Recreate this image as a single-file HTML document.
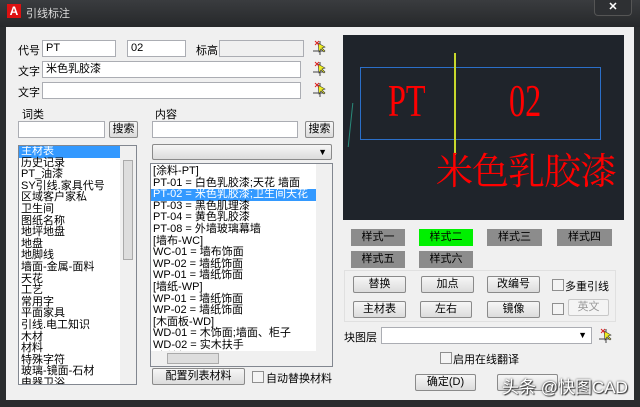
<!DOCTYPE html>
<html><head><meta charset="utf-8"><style>
*{margin:0;padding:0;box-sizing:border-box}
body{width:640px;height:407px;overflow:hidden;background:#2a2c2e;font-family:"Liberation Sans","Noto Sans CJK SC",sans-serif;font-size:11px;color:#000;position:relative}
.a{position:absolute;white-space:nowrap}
.in{position:absolute;background:#fff;border:1px solid #abadb3;height:17px;line-height:15px;padding-left:3px;font-size:11px}
.bt{position:absolute;background:linear-gradient(#f6f6f6,#dcdcdc);border:1px solid #8a8a8a;border-radius:2px;text-align:center;font-size:11px;line-height:15px;height:17px}
.sb{position:absolute;background:#8c8c8c;text-align:center;line-height:17px;height:17px;font-size:11px}
.cb{position:absolute;width:12px;height:12px;border:1px solid #8f8f8f;background:#f4f4f4}
.pk{position:absolute;width:16px;height:16px}
.ls{position:absolute;background:#fff;border:1px solid #828790;overflow:hidden;font-size:11px;line-height:11.6px}
.ls div{white-space:nowrap;padding-left:2px;height:11.6px}
.sel{background:#3399ff;color:#fff}
</style></head><body>
<div class="a" style="left:0;top:0;width:640px;height:27px;background:linear-gradient(#3a3c3f,#26282a)"></div>
<div class="a" style="left:7px;top:4px;width:14px;height:14px;background:#d11;color:#fff;font-weight:bold;font-size:12px;line-height:14px;text-align:center">A</div>
<div class="a" style="left:26px;top:5px;color:#ddd;font-size:11px">引线标注</div>
<div class="a" style="left:594px;top:0;width:38px;height:16px;border:1px solid #555;border-top:0;border-radius:0 0 4px 4px;background:#2e3033;color:#fff;text-align:center;font-weight:bold;line-height:15px">✕</div>
<div class="a" style="left:6px;top:27px;width:628px;height:373px;background:#f0f0f0"></div>

<div class="a" style="left:18px;top:42px">代号</div>
<div class="in" style="left:42px;top:40px;width:74px">PT</div>
<div class="in" style="left:127px;top:40px;width:59px">02</div>
<div class="a" style="left:196px;top:42px">标高</div>
<div class="in" style="left:219px;top:40px;width:85px;background:#f0f0f0"></div>
<div class="a" style="left:18px;top:63px">文字</div>
<div class="in" style="left:42px;top:61px;width:259px">米色乳胶漆</div>
<div class="a" style="left:18px;top:84px">文字</div>
<div class="in" style="left:42px;top:82px;width:259px"></div>
<svg class="pk" style="left:311px;top:39px" viewBox="0 0 16 16"><path d="M2 12h10M9 2v14" stroke="#444" fill="none"/><path d="M7 4l1 9 2-3 3 3 1-1-3-3 3-1z" fill="#ee2" stroke="#333" stroke-width=".6"/><path d="M4 2l4 4M8 2L4 6" stroke="#d22"/></svg>
<svg class="pk" style="left:311px;top:60px" viewBox="0 0 16 16"><path d="M2 12h10M9 2v14" stroke="#444" fill="none"/><path d="M7 4l1 9 2-3 3 3 1-1-3-3 3-1z" fill="#ee2" stroke="#333" stroke-width=".6"/><path d="M4 2l4 4M8 2L4 6" stroke="#d22"/></svg>
<svg class="pk" style="left:311px;top:81px" viewBox="0 0 16 16"><path d="M2 12h10M9 2v14" stroke="#444" fill="none"/><path d="M7 4l1 9 2-3 3 3 1-1-3-3 3-1z" fill="#ee2" stroke="#333" stroke-width=".6"/><path d="M4 2l4 4M8 2L4 6" stroke="#d22"/></svg>

<div class="a" style="left:22px;top:106px">词类</div>
<div class="in" style="left:18px;top:121px;width:87px"></div>
<div class="bt" style="left:109px;top:121px;width:29px">搜索</div>
<div class="ls" style="left:18px;top:145px;width:119px;height:240px">
<div class="sel" style="width:102px">主材表</div><div>历史记录</div><div>PT_油漆</div><div>SY引线.家具代号</div><div>区域客户家私</div><div>卫生间</div><div>图纸名称</div><div>地坪地盘</div><div>地盘</div><div>地脚线</div><div>墙面-金属-面料</div><div>天花</div><div>工艺</div><div>常用字</div><div>平面家具</div><div>引线.电工知识</div><div>木材</div><div>材料</div><div>特殊字符</div><div>玻璃-镜面-石材</div><div>电器卫浴</div><div>详图</div>
<div style="position:absolute;right:0;top:0;width:16px;height:238px;background:#f0f0f0;padding:0"><div style="position:absolute;left:3px;top:14px;width:10px;height:100px;background:#ddd;border:1px solid #aaa"></div></div></div>

<div class="a" style="left:155px;top:106px">内容</div>
<div class="in" style="left:152px;top:121px;width:146px"></div>
<div class="bt" style="left:305px;top:121px;width:29px">搜索</div>
<div class="bt" style="left:152px;top:144px;width:180px;height:16px;text-align:right;padding-right:4px;font-size:9px">▼</div>
<div class="ls" style="left:150px;top:163px;width:183px;height:204px;padding-top:2px">
<div>[涂料-PT]</div><div>PT-01 = 白色乳胶漆;天花 墙面</div><div class="sel" style="width:165px">PT-02 = 米色乳胶漆;卫生间天花</div><div>PT-03 = 黑色肌理漆</div><div>PT-04 = 黄色乳胶漆</div><div>PT-08 = 外墙玻璃幕墙</div><div>[墙布-WC]</div><div>WC-01 = 墙布饰面</div><div>WP-02 = 墙纸饰面</div><div>WP-01 = 墙纸饰面</div><div>[墙纸-WP]</div><div>WP-01 = 墙纸饰面</div><div>WP-02 = 墙纸饰面</div><div>[木面板-WD]</div><div>WD-01 = 木饰面;墙面、柜子</div><div>WD-02 = 实木扶手</div><div>[木地板-WF]</div>
<div style="position:absolute;right:0;top:0;width:16px;height:188px;background:#f0f0f0"></div>
<div style="position:absolute;left:0;bottom:0;width:181px;height:15px;background:#f0f0f0"><div style="position:absolute;left:16px;top:2px;width:52px;height:11px;background:#ddd;border:1px solid #aaa"></div></div></div>
<div class="bt" style="left:152px;top:368px;width:93px">配置列表材料</div>
<div class="cb" style="left:252px;top:371px"></div>
<div class="a" style="left:266px;top:370px">自动替换材料</div>

<div class="a" style="left:343px;top:35px;width:281px;height:185px;background:#1f242b"></div>
<div class="a" style="left:360px;top:67px;width:241px;height:73px;border:1px solid #2b6fc8"></div>
<div class="a" style="left:454px;top:53px;width:2px;height:102px;background:#c8d82c"></div>
<div class="a" style="left:350px;top:103px;width:1px;height:44px;background:#2a8a7a;transform:skewX(-6deg)"></div>
<div class="a" style="left:388px;top:74px;color:#f00;font-family:'Liberation Serif','Noto Serif CJK SC',serif;font-size:46px;transform:scaleX(.7);transform-origin:left">PT</div>
<div class="a" style="left:509px;top:74px;color:#f00;font-family:'Liberation Serif','Noto Serif CJK SC',serif;font-size:46px;transform:scaleX(.7);transform-origin:left">02</div>
<div class="a" style="left:436px;top:143px;color:#f00;font-family:'Noto Serif CJK SC',serif;font-size:37px;line-height:50px;letter-spacing:-1px">米色乳胶漆</div>

<div class="sb" style="left:351px;top:229px;width:54px">样式一</div>
<div class="sb" style="left:419px;top:229px;width:54px;background:#00f000">样式二</div>
<div class="sb" style="left:487px;top:229px;width:55px">样式三</div>
<div class="sb" style="left:557px;top:229px;width:55px">样式四</div>
<div class="sb" style="left:351px;top:251px;width:54px">样式五</div>
<div class="sb" style="left:419px;top:251px;width:54px">样式六</div>
<div class="a" style="left:344px;top:270px;width:272px;height:52px;border:1px solid #e0e0e0"></div>
<div class="bt" style="left:353px;top:276px;width:53px">替换</div>
<div class="bt" style="left:421px;top:276px;width:53px">加点</div>
<div class="bt" style="left:487px;top:276px;width:53px">改编号</div>
<div class="cb" style="left:552px;top:279px"></div><div class="a" style="left:565px;top:278px">多重引线</div>
<div class="bt" style="left:353px;top:301px;width:53px">主材表</div>
<div class="bt" style="left:420px;top:301px;width:52px">左右</div>
<div class="bt" style="left:487px;top:301px;width:53px">镜像</div>
<div class="cb" style="left:552px;top:303px"></div>
<div class="bt" style="left:568px;top:299px;width:41px;color:#999;background:#f4f4f4;border-color:#c8c8c8">英文</div>
<div class="a" style="left:344px;top:329px">块图层</div>
<div class="in" style="left:381px;top:327px;width:211px;text-align:right;padding-right:4px;font-size:9px">▼</div>
<svg class="pk" style="left:597px;top:327px" viewBox="0 0 16 16"><path d="M2 12h10M9 2v14" stroke="#444" fill="none"/><path d="M7 4l1 9 2-3 3 3 1-1-3-3 3-1z" fill="#ee2" stroke="#333" stroke-width=".6"/><path d="M4 2l4 4M8 2L4 6" stroke="#d22"/></svg>
<div class="cb" style="left:440px;top:352px"></div><div class="a" style="left:453px;top:351px">启用在线翻译</div>
<div class="bt" style="left:415px;top:374px;width:61px">确定(D)</div>
<div class="bt" style="left:497px;top:374px;width:61px"></div>
<div class="a" style="left:502px;top:373px;color:#fff;font-size:17px;text-shadow:0 0 2px #333,1px 1px 1px #333">头条 @快图CAD</div>
</body></html>
